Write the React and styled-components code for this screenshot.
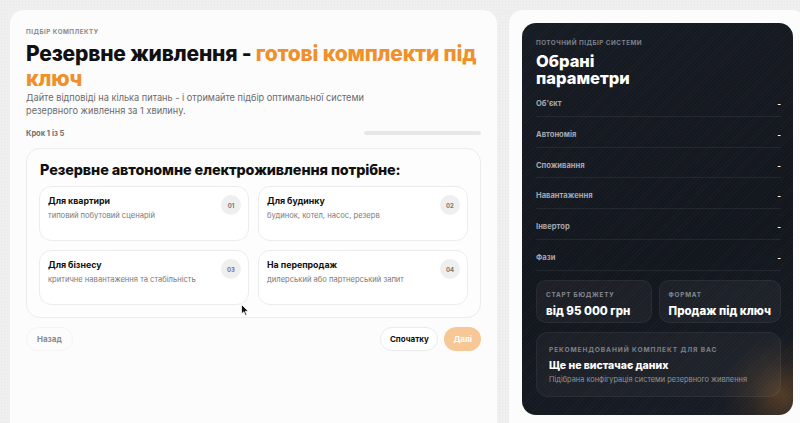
import React from "react";
import styled, { createGlobalStyle } from "styled-components";

const GlobalStyle = createGlobalStyle`
  html, body { margin: 0; padding: 0; }
  body {
    background: #efefef;
    font-family: "Inter", "Noto Sans", sans-serif;
    overflow: hidden;
    -webkit-font-smoothing: antialiased;
  }
  * { box-sizing: border-box; }
`;

const Page = styled.div`
  display: flex;
  gap: 12px;
  padding: 10px 0 0 10px;
  width: 820px;
  height: 423px;
  background-color: #efefef;
  background-image: radial-gradient(rgba(0,0,0,0.025) 1px, transparent 1px);
  background-size: 3px 3px;
  position: relative;
`;

const LeftCard = styled.section`
  width: 487px;
  height: 420px;
  background: #fcfcfc;
  border-radius: 14px 14px 0 0;
  padding: 18px 16px 0 16px;
  display: flex;
  flex-direction: column;
`;

const Eyebrow = styled.div`
  font-size: ${(p) => p.$size || 6.3}px;
  font-weight: 700;
  letter-spacing: ${(p) => p.$ls ?? 0.5}px;
  text-transform: uppercase;
  color: ${(p) => p.$color || "#8a8a8a"};
  line-height: 8px;
  white-space: nowrap;
`;

const Title = styled.h1`
  margin: 5px 0 0 0;
  font-size: 21px;
  line-height: 25px;
  font-weight: 800;
  color: #111;
  letter-spacing: -0.2px;
`;

const Accent = styled.span`
  color: #f0902a;
`;

const Lead = styled.p`
  margin: 0;
  font-size: 9.2px;
  line-height: 13px;
  color: #6b6b6b;
  max-width: 350px;
`;

const StepRow = styled.div`
  margin-top: 11px;
  display: flex;
  align-items: center;
  justify-content: space-between;
  height: 10px;
`;

const StepText = styled.span`
  font-size: 7.5px;
  font-weight: 700;
  color: #6f6f6f;
`;

const Progress = styled.div`
  width: 117px;
  height: 4px;
  border-radius: 2px;
  background: #e7e7e7;
`;

const QuestionBox = styled.div`
  margin-top: 10px;
  border: 1px solid #ececec;
  border-radius: 14px;
  padding: 11px 12px 12px 12px;
  background: #fdfdfd;
`;

const QuestionTitle = styled.h2`
  margin: 0 0 7px 1px;
  font-size: 14.4px;
  line-height: 19px;
  font-weight: 800;
  color: #111;
  letter-spacing: -0.1px;
`;

const OptionsGrid = styled.div`
  display: grid;
  grid-template-columns: 1fr 1fr;
  gap: 9px;
`;

const OptionCard = styled.div`
  position: relative;
  height: 55px;
  border: 1px solid #ececec;
  border-radius: 12px;
  background: #fff;
  padding: 8px 34px 0 8px;
`;

const OptionTitle = styled.div`
  font-size: 8.8px;
  line-height: 11px;
  font-weight: 700;
  color: #111;
`;

const OptionDesc = styled.div`
  margin-top: 5px;
  font-size: 7.6px;
  line-height: 10px;
  color: #7a7a7a;
`;

const Badge = styled.span`
  position: absolute;
  top: 8px;
  right: 7px;
  width: 20px;
  height: 20px;
  border-radius: 50%;
  background: #efefef;
  display: flex;
  align-items: center;
  justify-content: center;
  font-size: 6px;
  font-weight: 700;
  color: #777;
`;

const Actions = styled.div`
  margin-top: 9px;
  display: flex;
  align-items: center;
  gap: 6px;
`;

const Button = styled.button`
  height: 24px;
  padding: 0 ${(p) => p.$px || 11}px;
  border-radius: 12px;
  font-family: inherit;
  font-size: 8px;
  font-weight: 700;
  cursor: pointer;
  border: 1px solid ${(p) => (p.$variant === "outline" ? "#ebebeb" : p.$variant === "ghost" ? "#f5f5f5" : "transparent")};
  background: ${(p) => (p.$variant === "primary" ? "#f7c896" : p.$variant === "outline" ? "#fff" : "transparent")};
  color: ${(p) => (p.$variant === "primary" ? "#fff" : p.$variant === "outline" ? "#111" : "#8a8a8a")};
  ${(p) => p.$push && "margin-left: auto;"}
`;

const RightCard = styled.aside`
  width: 297px;
  height: 420px;
  background: #fcfcfc;
  border-radius: 14px 14px 0 0;
  padding: 13px 13px 0 13px;
`;

const DarkPanel = styled.div`
  position: relative;
  overflow: hidden;
  height: 392px;
  border-radius: 14px;
  background-color: #151920;
  background-image:
    radial-gradient(circle at 96% 95%, rgba(196, 122, 44, 0.34), rgba(196, 122, 44, 0.1) 32px, transparent 60px),
    repeating-linear-gradient(135deg, rgba(255,255,255,0.022) 0 1px, transparent 1px 3px),
    linear-gradient(160deg, #171b23 0%, #12161d 60%, #181c24 100%);
  padding: 16px 12px 17px 14px;
  color: #fff;
`;

const PanelTitle = styled.h3`
  margin: 6px 0 0 0;
  font-size: 16.5px;
  line-height: 17px;
  font-weight: 800;
  color: #fff;
  max-width: 120px;
`;

const ParamList = styled.div`
  margin-top: -1px;
`;

const ParamRow = styled.div`
  display: flex;
  justify-content: space-between;
  align-items: center;
  padding: 13px 0 7px 0;
  border-bottom: 1px solid rgba(255,255,255,0.07);
  height: 30.8px;
`;

const ParamLabel = styled.span`
  font-size: 7.6px;
  line-height: 10px;
  font-weight: 700;
  color: #a3a7af;
`;

const ParamValue = styled.span`
  font-size: 8px;
  font-weight: 700;
  color: #fff;
`;

const Stats = styled.div`
  margin-top: 9px;
  display: grid;
  grid-template-columns: 1fr 1fr;
  gap: 7px;
`;

const StatBox = styled.div`
  height: 43px;
  border-radius: 10px;
  background: rgba(255,255,255,0.045);
  border: 1px solid rgba(255,255,255,0.05);
  padding: 10px 9px 0 9px;
`;

const StatValue = styled.div`
  margin-top: 5px;
  font-size: 11.5px;
  line-height: 14px;
  font-weight: 800;
  color: #fff;
  white-space: nowrap;
`;

const RecBox = styled.div`
  margin-top: 9px;
  height: 65px;
  border-radius: 12px;
  background: rgba(255,255,255,0.04);
  border: 1px solid rgba(255,255,255,0.05);
  padding: 13px 12px 0 12px;
`;

const RecTitle = styled.div`
  margin-top: 5px;
  font-size: 10.5px;
  line-height: 13px;
  font-weight: 800;
  color: #fff;
`;

const RecDesc = styled.div`
  margin-top: 3px;
  font-size: 7.4px;
  line-height: 10px;
  color: #8f949c;
`;

const Cursor = styled.svg`
  position: absolute;
  left: 241px;
  top: 304px;
  width: 8px;
  height: 12px;
`;

const options = [
  { t: "Для квартири", d: "типовий побутовий сценарій", n: "01" },
  { t: "Для будинку", d: "будинок, котел, насос, резерв", n: "02" },
  { t: "Для бізнесу", d: "критичне навантаження та стабільність", n: "03" },
  { t: "На перепродаж", d: "дилерський або партнерський запит", n: "04" },
];

const params = ["Об'єкт", "Автономія", "Споживання", "Навантаження", "Інвертор", "Фази"];

export default function App() {
  return (
    <>
      <GlobalStyle />
      <Page>
        <LeftCard>
          <Eyebrow>Підбір комплекту</Eyebrow>
          <Title>
            Резервне живлення - <Accent>готові комплекти під</Accent> <Accent>ключ</Accent>
          </Title>
          <Lead>
            Дайте відповіді на кілька питань - і отримайте підбір оптимальної системи резервного живлення за 1 хвилину.
          </Lead>
          <StepRow>
            <StepText>Крок 1 із 5</StepText>
            <Progress />
          </StepRow>
          <QuestionBox>
            <QuestionTitle>Резервне автономне електроживлення потрібне:</QuestionTitle>
            <OptionsGrid>
              {options.map((o) => (
                <OptionCard key={o.n}>
                  <OptionTitle>{o.t}</OptionTitle>
                  <OptionDesc>{o.d}</OptionDesc>
                  <Badge>{o.n}</Badge>
                </OptionCard>
              ))}
            </OptionsGrid>
          </QuestionBox>
          <Actions>
            <Button $variant="ghost" $px={10}>Назад</Button>
            <Button $variant="outline" $px={8.5} $push>Спочатку</Button>
            <Button $variant="primary" $px={8}>Далі</Button>
          </Actions>
        </LeftCard>
        <RightCard>
          <DarkPanel>
            <Eyebrow $color="#7d828b">Поточний підбір системи</Eyebrow>
            <PanelTitle>Обрані параметри</PanelTitle>
            <ParamList>
              {params.map((p) => (
                <ParamRow key={p}>
                  <ParamLabel>{p}</ParamLabel>
                  <ParamValue>-</ParamValue>
                </ParamRow>
              ))}
            </ParamList>
            <Stats>
              <StatBox>
                <Eyebrow $color="#858a93" $ls={0.8}>Старт бюджету</Eyebrow>
                <StatValue>від 95 000 грн</StatValue>
              </StatBox>
              <StatBox>
                <Eyebrow $color="#858a93" $ls={0.8}>Формат</Eyebrow>
                <StatValue>Продаж під ключ</StatValue>
              </StatBox>
            </Stats>
            <RecBox>
              <Eyebrow $color="#7d828b" $size={6.6} $ls={0.9}>Рекомендований комплект для вас</Eyebrow>
              <RecTitle>Ще не вистачає даних</RecTitle>
              <RecDesc>Підібрана конфігурація системи резервного живлення</RecDesc>
            </RecBox>
          </DarkPanel>
        </RightCard>
        <Cursor viewBox="0 0 8 12">
          <path d="M0.5 0.5 L0.5 10 L2.8 7.8 L4.4 11.4 L5.8 10.8 L4.3 7.3 L7.4 7.3 Z" fill="#111" stroke="#fff" strokeWidth="0.8" />
        </Cursor>
      </Page>
    </>
  );
}
